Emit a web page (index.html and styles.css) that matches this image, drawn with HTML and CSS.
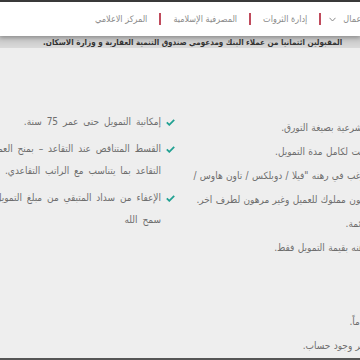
FILE: index.html
```html
<!DOCTYPE html>
<html lang="ar" dir="rtl">
<head>
    <meta charset="UTF-8">
    <title>التمويل العقاري</title>
    <link rel="stylesheet" href="styles.css">
</head>

<body>
    <div class="top-bar"></div>

    <header class="site-header">
        <ul class="main-menu">
            <li class="has-sub">
                <span>الخدمات المصرفية للأعمال</span>
                <svg class="caret" width="7" height="5" viewBox="0 0 7 5">
                    <path d="M0.5 0.8 L3.5 4 L6.5 0.8" fill="none" stroke="#8a8a8a" stroke-width="1"/>
                </svg>
            </li>
            <li>إدارة الثروات</li>
            <li>المصرفية الإسلامية</li>
            <li>المركز الاعلامي</li>
        </ul>
    </header>

    <div class="intro-tail">
        <p>المقبولين ائتمانيا من عملاء البنك ومدعومي صندوق التنمية العقارية و وزارة الاسكان.</p>
    </div>

    <main class="product">
        <div class="features">
            <div class="col col-terms">
                <ul class="terms">
                    <li>الشرعية بصيغة التورق.</li>
                    <li>ثابت لكامل مدة التمويل.</li>
                    <li>ترغب في رهنه "فيلا / دوبلكس / تاون هاوس /<br>يكون مملوك للعميل وغير مرهون لطرف اخر.</li>
                    <li>قائمة.</li>
                    <li>رهنه بقيمة التمويل فقط.</li>
                </ul>
                <ul class="terms terms-extra">
                    <li>عاماً.</li>
                    <li>غير وجود حساب.</li>
                </ul>
            </div>

            <div class="col col-benefits">
                <ul class="benefits">
                    <li>
                        <svg class="check" width="9" height="7" viewBox="0 0 9 7"><path d="M0.8 3.4 L3.3 5.8 L8.2 0.9" fill="none" stroke="#21a192" stroke-width="1.8"/></svg>
                        <span>إمكانية التمويل حتى عمر 75 سنة.</span>
                    </li>
                    <li>
                        <svg class="check" width="9" height="7" viewBox="0 0 9 7"><path d="M0.8 3.4 L3.3 5.8 L8.2 0.9" fill="none" stroke="#21a192" stroke-width="1.8"/></svg>
                        <span>القسط المتناقص عند التقاعد – بمنح العميل ميزة تخفيض القسط الشهري عند<br>التقاعد بما يتناسب مع الراتب التقاعدي.</span>
                    </li>
                    <li>
                        <svg class="check" width="9" height="7" viewBox="0 0 9 7"><path d="M0.8 3.4 L3.3 5.8 L8.2 0.9" fill="none" stroke="#21a192" stroke-width="1.8"/></svg>
                        <span>الإعفاء من سداد المتبقي من مبلغ التمويل في حالة الوفاة أو العجز الكلي لا<br>سمح الله</span>
                    </li>
                </ul>
            </div>
        </div>
    </main>

    <div class="bottom-bar"></div>
</body>
</html>
```

FILE: styles.css
```css
* {
    box-sizing: border-box;
}

html, body {
    margin: 0;
    padding: 0;
}

body {
    font-family: "DejaVu Sans Condensed", "DejaVu Sans", sans-serif;
    background-color: #eeeeee;
    color: #6e6e6e;
    height: 360px;
    overflow: hidden;
    display: flex;
    flex-direction: column;
}

.top-bar {
    flex: none;
    height: 2px;
    background-color: #3b3b3b;
}

.site-header {
    flex: none;
    height: 34px;
    background-color: #fff;
    display: flex;
    align-items: center;
    justify-content: flex-end;
    padding-left: 83px;
    box-shadow: 0 2px 4px rgba(0, 0, 0, 0.25);
    position: relative;
    z-index: 2;
}

.main-menu {
    list-style: none;
    margin: 0;
    padding: 0;
    display: flex;
    align-items: center;
    white-space: nowrap;
}

.main-menu li {
    display: flex;
    align-items: center;
    gap: 7px;
    padding: 0 12px;
    font-size: 9px;
    line-height: 12px;
    color: #8a8a8a;
}

.main-menu .has-sub {
    padding-left: 8px;
}

.main-menu li + li {
    border-right: 2px solid #c04b5d;
}

.intro-tail {
    flex: none;
    height: 12px;
    background: linear-gradient(#c2c2c2, #dadada);
    overflow: hidden;
    display: flex;
    justify-content: flex-end;
    padding-left: 43px;
}

.intro-tail p {
    flex: none;
    margin: 0;
    white-space: nowrap;
    font-size: 8px;
    font-weight: bold;
    line-height: 13px;
    color: #333;
}

.product {
    flex: 1;
    overflow: hidden;
}

.features {
    width: 508px;
    margin-right: -8px;
    display: grid;
    grid-template-columns: 180px 318px;
    column-gap: 10px;
}

.col ul {
    list-style: none;
    margin: 0;
    padding: 0;
    white-space: nowrap;
    font-size: 10px;
}

.col-terms {
    padding-top: 68px;
}

.terms {
    word-spacing: 0.5px;
}

.terms li {
    line-height: 24px;
}

.col .terms-extra {
    margin-top: 50px;
}

.col-benefits {
    padding-top: 63px;
    padding-right: 3px;
}

.benefits {
    word-spacing: 2px;
}

.benefits li {
    display: flex;
    align-items: flex-start;
    gap: 5px;
    line-height: 22px;
    margin-bottom: 5px;
}

.benefits .check {
    flex: none;
    margin-top: 8px;
}

.bottom-bar {
    flex: none;
    height: 2px;
    background-color: #555;
}
```
